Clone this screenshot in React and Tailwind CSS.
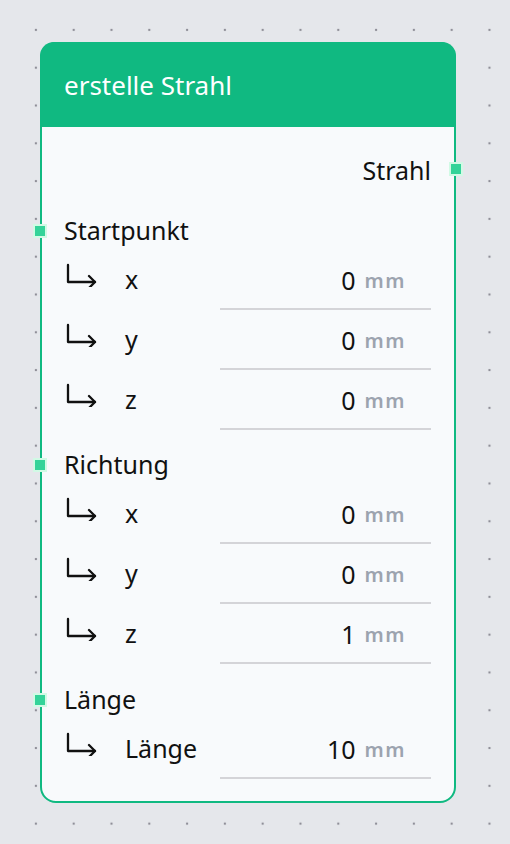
import React from 'react';

const font = { fontFamily: '"Noto Sans", "Liberation Sans", sans-serif' };

const Arrow = () => (
  <svg width="32" height="24" viewBox="0 0 32 24" fill="none" stroke="#111" strokeWidth="2.3" strokeLinecap="round" strokeLinejoin="round">
    <path d="M2 2 V19 H29" />
    <path d="M23 13 L29 19 L23 25" />
  </svg>
);

const SubRow = ({ label, value }) => (
  <div className="h-[60px] flex items-center">
    <div className="w-[61px] pl-[2px] flex items-center -mt-[10px]">
      <Arrow />
    </div>
    <span className="w-[95px] text-[25px] text-[#111]">{label}</span>
    <div className="flex-1 h-[56px] flex items-center justify-end border-b-2 border-[#d4d4d8] mt-[4px] pr-[25px]">
      <span className="text-[25px] text-[#111]">{value}</span>
      <span className="ml-[9px] text-[20px] font-semibold tracking-[1.5px] text-[#9ca3af]">mm</span>
    </div>
  </div>
);

const Section = ({ title, rows, mt }) => (
  <div className={mt}>
    <div className="relative h-[38px] flex items-center">
      <span className="absolute left-[-31px] top-1/2 -translate-y-1/2 w-[14px] h-[14px] bg-[#34d399] border-2 border-[#d1fae5]" />
      <span className="text-[25px] text-[#111]">{title}</span>
    </div>
    {rows.map((r) => (
      <SubRow key={r.label} label={r.label} value={r.value} />
    ))}
  </div>
);

export default function App() {
  return (
    <div
      className="w-full min-h-screen h-[844px] bg-[#e5e7eb] bg-[radial-gradient(circle,#8f8f98_1.1px,transparent_1.6px)] bg-[size:37.8px_37.8px] bg-[position:17px_11px] pt-[42px] pl-[40px]"
      style={font}
    >
      <div className="w-[416px] rounded-2xl border-2 border-[#10b981] bg-[#f8fafc] relative">
        <div className="h-[85px] bg-[#10b981] rounded-t-[14px] flex items-center pl-[22px] -mx-[2px] -mt-[2px] pt-[2px]">
          <span className="text-[26px] text-white ml-[2px]">erstelle Strahl</span>
        </div>
        <div className="pl-[22px] pr-[23px] pt-[25px] pb-[22px]">
          <div className="relative h-[38px] flex items-center justify-end">
            <span className="text-[25px] text-[#111]">Strahl</span>
            <span className="absolute right-[-32px] top-[17px] -translate-y-1/2 w-[14px] h-[14px] bg-[#34d399] border-2 border-[#d1fae5]" />
          </div>
          <Section
            title="Startpunkt"
            mt="mt-[22px]"
            rows={[
              { label: 'x', value: '0' },
              { label: 'y', value: '0' },
              { label: 'z', value: '0' },
            ]}
          />
          <Section
            title="Richtung"
            mt="mt-[16px]"
            rows={[
              { label: 'x', value: '0' },
              { label: 'y', value: '0' },
              { label: 'z', value: '1' },
            ]}
          />
          <Section title="Länge" mt="mt-[17px]" rows={[{ label: 'Länge', value: '10' }]} />
        </div>
      </div>
    </div>
  );
}
